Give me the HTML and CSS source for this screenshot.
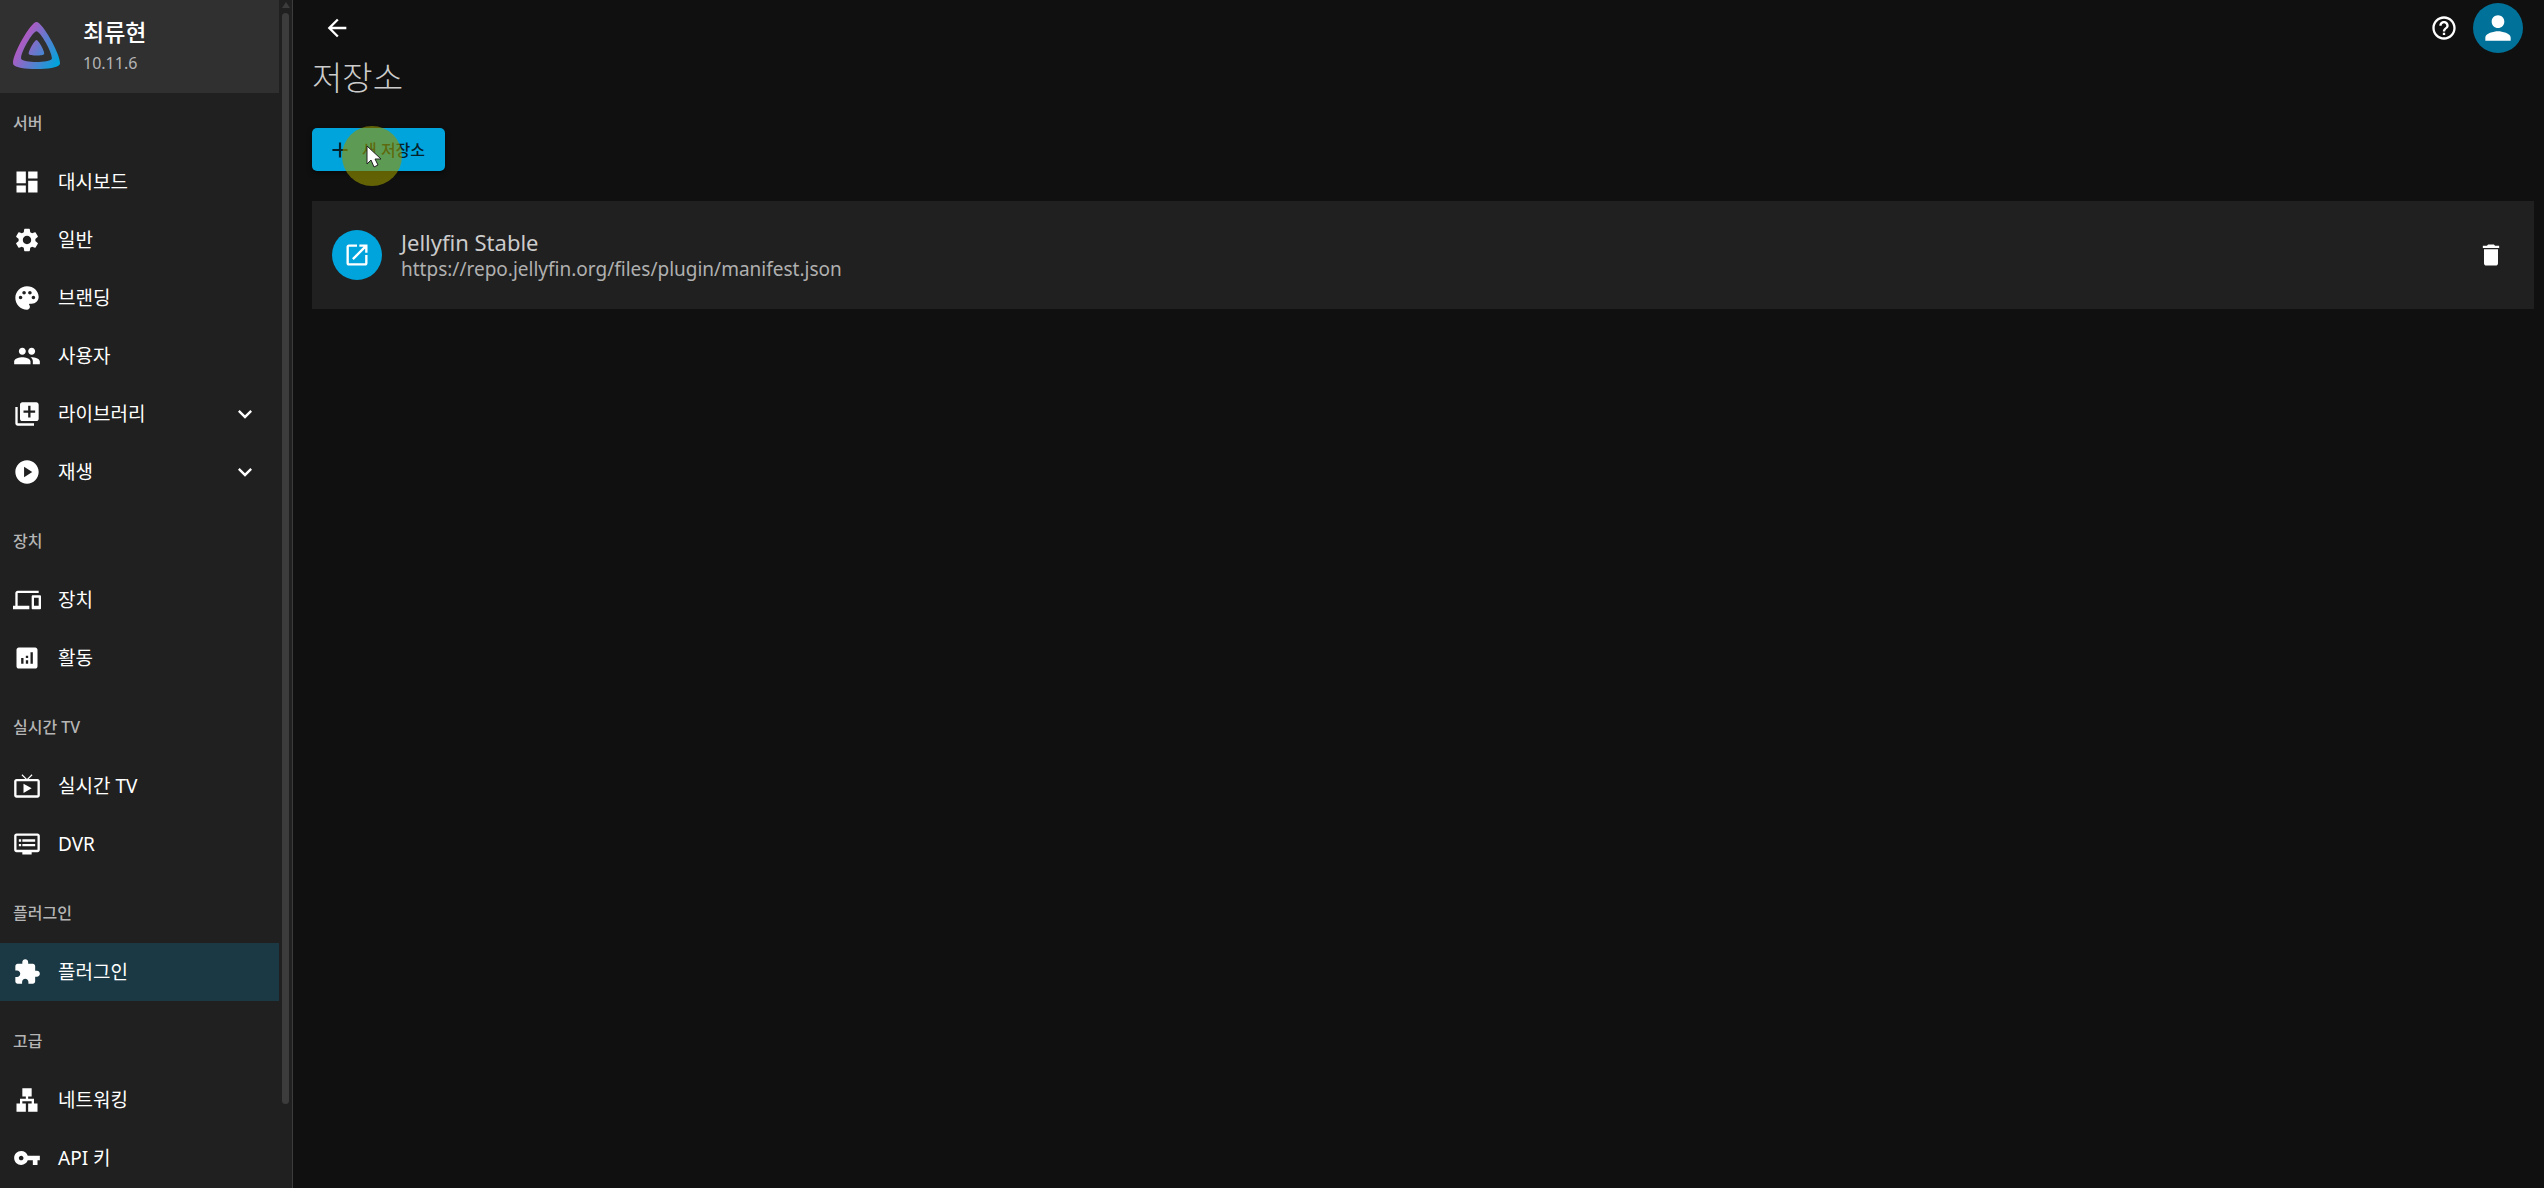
FILE: index.html
```html
<!DOCTYPE html>
<html lang="ko">
<head>
  <meta charset="UTF-8" />
  <meta name="viewport" content="width=device-width, initial-scale=1" />
  <title>저장소</title>
  <link rel="stylesheet" href="styles.css">
</head>
<body>
  <aside class="sidebar">
    <nav class="drawer">
      <a class="brand" href="#">
        <svg class="brand-logo" viewBox="0 0 512 512">
          <defs>
            <linearGradient id="logo-gradient" gradientUnits="userSpaceOnUse" x1="110" y1="213" x2="496" y2="436">
              <stop offset="0" stop-color="#aa5cc3" />
              <stop offset="1" stop-color="#00a4dc" />
            </linearGradient>
          </defs>
          <path fill="url(#logo-gradient)" d="M256 196.2c-22.4 0-94.8 131.3-83.8 153.4s156.8 21.9 167.7 0-61.3-153.4-83.9-153.4z" />
          <path fill="url(#logo-gradient)" fill-rule="evenodd" d="M256 0C188.3 0-29.8 395.4 3.4 462.2s472.3 66 505.2 0S323.8 0 256 0zm165.6 404.3c-21.6 43.2-309.3 43.8-331.1 0S211.7 101.4 256 101.4 443.2 361 421.6 404.3z" />
        </svg>
        <span class="brand-text">
          <span class="brand-name">최류현</span>
          <span class="brand-version">10.11.6</span>
        </span>
      </a>

      <section class="nav-group">
        <h2>서버</h2>
        <a class="nav-item" href="#"><svg class="icon" viewBox="0 0 24 24"><path d="M3 13h8V3H3v10zm0 8h8v-6H3v6zm10 0h8V11h-8v10zm0-18v6h8V3h-8z" /></svg><span>대시보드</span></a>
        <a class="nav-item" href="#"><svg class="icon" viewBox="0 0 24 24"><path d="M19.14 12.94c.04-.3.06-.61.06-.94 0-.32-.02-.64-.07-.94l2.03-1.58c.18-.14.23-.41.12-.61l-1.92-3.32c-.12-.22-.37-.29-.59-.22l-2.39.96c-.5-.38-1.03-.7-1.62-.94l-.36-2.54c-.04-.24-.24-.41-.48-.41h-3.84c-.24 0-.43.17-.47.41l-.36 2.54c-.59.24-1.13.57-1.62.94l-2.39-.96c-.22-.08-.47 0-.59.22L2.74 8.87c-.12.21-.08.47.12.61l2.03 1.58c-.05.3-.09.63-.09.94s.02.64.07.94l-2.03 1.58c-.18.14-.23.41-.12.61l1.92 3.32c.12.22.37.29.59.22l2.39-.96c.5.38 1.03.7 1.62.94l.36 2.54c.05.24.24.41.48.41h3.84c.24 0 .44-.17.47-.41l.36-2.54c.59-.24 1.13-.56 1.62-.94l2.39.96c.22.08.47 0 .59-.22l1.92-3.32c.12-.22.07-.47-.12-.61l-2.01-1.58zM12 15.6c-1.98 0-3.6-1.62-3.6-3.6s1.62-3.6 3.6-3.6 3.6 1.62 3.6 3.6-1.62 3.6-3.6 3.6z" /></svg><span>일반</span></a>
        <a class="nav-item" href="#"><svg class="icon" viewBox="0 0 24 24"><path d="M12 2C6.49 2 2 6.49 2 12s4.49 10 10 10c1.38 0 2.5-1.12 2.5-2.5 0-.61-.23-1.2-.64-1.67-.08-.1-.13-.21-.13-.33 0-.28.22-.5.5-.5H16c3.31 0 6-2.69 6-6 0-4.96-4.49-9-10-9zm-5.5 11c-.83 0-1.5-.67-1.5-1.5S5.67 10 6.5 10s1.5.67 1.5 1.5S7.33 13 6.5 13zm3-4C8.67 9 8 8.33 8 7.5S8.67 6 9.5 6s1.5.67 1.5 1.5S10.33 9 9.5 9zm5 0c-.83 0-1.5-.67-1.5-1.5S13.67 6 14.5 6s1.5.67 1.5 1.5S15.33 9 14.5 9zm3 4c-.83 0-1.5-.67-1.5-1.5s.67-1.5 1.5-1.5 1.5.67 1.5 1.5-.67 1.5-1.5 1.5z" /></svg><span>브랜딩</span></a>
        <a class="nav-item" href="#"><svg class="icon" viewBox="0 0 24 24"><path d="M16 11c1.66 0 2.99-1.34 2.99-3S17.66 5 16 5s-3 1.34-3 3 1.34 3 3 3zm-8 0c1.66 0 2.99-1.34 2.99-3S9.66 5 8 5 5 6.34 5 8s1.34 3 3 3zm0 2c-2.33 0-7 1.17-7 3.5V19h14v-2.5c0-2.33-4.67-3.5-7-3.5zm8 0c-.29 0-.62.02-.97.05 1.16.84 1.97 1.97 1.97 3.45V19h6v-2.5c0-2.33-4.67-3.5-7-3.5z" /></svg><span>사용자</span></a>
        <a class="nav-item" href="#"><svg class="icon" viewBox="0 0 24 24"><path d="M4 6H2v14c0 1.1.9 2 2 2h14v-2H4V6zm16-4H8c-1.1 0-2 .9-2 2v12c0 1.1.9 2 2 2h12c1.1 0 2-.9 2-2V4c0-1.1-.9-2-2-2zm-1 9h-4v4h-2v-4H9V9h4V5h2v4h4v2z" /></svg><span>라이브러리</span><svg class="icon chevron" viewBox="0 0 24 24"><path d="M16.59 8.59 12 13.17 7.41 8.59 6 10l6 6 6-6z" /></svg></a>
        <a class="nav-item" href="#"><svg class="icon" viewBox="0 0 24 24"><path d="M12 2C6.48 2 2 6.48 2 12s4.48 10 10 10 10-4.48 10-10S17.52 2 12 2zm-2.5 14.500v-9l7 4.5-7 4.5z" /></svg><span>재생</span><svg class="icon chevron" viewBox="0 0 24 24"><path d="M16.59 8.59 12 13.17 7.41 8.59 6 10l6 6 6-6z" /></svg></a>
      </section>

      <section class="nav-group">
        <h2>장치</h2>
        <a class="nav-item" href="#"><svg class="icon" viewBox="0 0 24 24"><path d="M4 6h18V4H4c-1.1 0-2 .9-2 2v11H0v3h14v-3H4V6zm19 2h-6c-.55 0-1 .45-1 1v10c0 .55.45 1 1 1h6c.55 0 1-.45 1-1V9c0-.55-.45-1-1-1zm-1 9h-4v-7h4v7z" /></svg><span>장치</span></a>
        <a class="nav-item" href="#"><svg class="icon" viewBox="0 0 24 24"><path d="M19 3H5c-1.1 0-2 .9-2 2v14c0 1.1.9 2 2 2h14c1.1 0 2-.9 2-2V5c0-1.1-.9-2-2-2zM9 17H7v-5h2v5zm4 0h-2v-3h2v3zm0-5h-2v-2h2v2zm4 5h-2V7h2v10z" /></svg><span>활동</span></a>
      </section>

      <section class="nav-group">
        <h2>실시간 TV</h2>
        <a class="nav-item" href="#"><svg class="icon" viewBox="0 0 24 24"><path d="M21 6h-7.59l3.29-3.29L16 2l-4 4-4-4-.7.71L10.59 6H3c-1.1 0-2 .89-2 2v12c0 1.1.9 2 2 2h18c1.1 0 2-.9 2-2V8c0-1.11-.9-2-2-2zm0 14H3V8h18v12zM9 10v8l7-4z" /></svg><span>실시간 TV</span></a>
        <a class="nav-item" href="#"><svg class="icon" viewBox="0 0 24 24"><path d="M21 3H3c-1.1 0-2 .9-2 2v12c0 1.1.9 2 2 2h5v2h8v-2h5c1.1 0 1.99-.9 1.99-2L23 5c0-1.1-.9-2-2-2zm0 14H3V5h18v12zm-2-9H8v2h11V8zm0 4H8v2h11v-2zM7 8H5v2h2V8zm0 4H5v2h2v-2z" /></svg><span>DVR</span></a>
      </section>

      <section class="nav-group">
        <h2>플러그인</h2>
        <a class="nav-item selected" href="#" aria-current="page"><svg class="icon" viewBox="0 0 24 24"><path d="M20.5 11H19V7c0-1.1-.9-2-2-2h-4V3.500C13 2.12 11.88 1 10.5 1S8 2.12 8 3.500V5H4c-1.1 0-1.99.9-1.99 2v3.800H3.500c1.49 0 2.7 1.21 2.7 2.7s-1.21 2.7-2.7 2.700H2V20c0 1.1.9 2 2 2h3.800v-1.500c0-1.49 1.21-2.7 2.7-2.7s2.7 1.21 2.7 2.700V22H17c1.1 0 2-.9 2-2v-4h1.500c1.38 0 2.5-1.12 2.5-2.500S21.88 11 20.5 11z" /></svg><span>플러그인</span></a>
      </section>

      <section class="nav-group">
        <h2>고급</h2>
        <a class="nav-item" href="#"><svg class="icon" viewBox="0 0 24 24"><path d="M13 22h8v-7h-3v-4h-5V9h3V2H8v7h3v2H6v4H3v7h8v-7H8v-2h8v2h-3z" /></svg><span>네트워킹</span></a>
        <a class="nav-item" href="#"><svg class="icon" viewBox="0 0 24 24"><path d="M12.65 10C11.83 7.67 9.61 6 7 6c-3.31 0-6 2.69-6 6s2.69 6 6 6c2.61 0 4.83-1.67 5.65-4H17v4h4v-4h2v-4H12.65zM7 14c-1.1 0-2-.9-2-2s.9-2 2-2 2 .9 2 2-.9 2-2 2z" /></svg><span>API 키</span></a>
      </section>
    </nav>
    <div class="scrollbar">
      <span class="scroll-arrow"></span>
      <span class="scroll-thumb"></span>
    </div>
  </aside>

  <main class="page">
    <header class="toolbar">
      <button class="icon-button" type="button" aria-label="뒤로"><svg class="icon" viewBox="0 0 24 24"><path d="M20 11H7.83l5.59-5.59L12 4l-8 8 8 8 1.41-1.41L7.83 13H20v-2z" /></svg></button>
      <div class="toolbar-actions">
        <a class="icon-button" href="#" aria-label="도움말"><svg class="icon" viewBox="0 0 24 24"><path d="M11 18h2v-2h-2v2zm1-16C6.48 2 2 6.48 2 12s4.48 10 10 10 10-4.48 10-10S17.52 2 12 2zm0 18c-4.41 0-8-3.59-8-8s3.59-8 8-8 8 3.59 8 8-3.59 8-8 8zm0-14c-2.21 0-4 1.79-4 4h2c0-1.1.9-2 2-2s2 .9 2 2c0 2-3 1.75-3 5h2c0-2.25 3-2.5 3-5 0-2.21-1.79-4-4-4z" /></svg></a>
        <button class="avatar" type="button" aria-label="사용자 메뉴"><svg viewBox="0 0 24 24"><path d="M12 12c2.21 0 4-1.79 4-4s-1.79-4-4-4-4 1.79-4 4 1.79 4 4 4zm0 2c-2.67 0-8 1.34-8 4v2h16v-2c0-2.66-5.33-4-8-4z" /></svg></button>
      </div>
    </header>

    <div class="content">
      <h1>저장소</h1>

      <button class="new-button" type="button">
        <svg viewBox="0 0 24 24"><path d="M19 13h-6v6h-2v-6H5v-2h6V5h2v6h6v2z" /></svg>
        <span>새 저장소</span>
        <span class="pointer">
          <svg viewBox="0 0 16 24"><path d="M1 1v18l4-4 3 7 4-2-3-6h6z" /></svg>
        </span>
      </button>

      <ul class="repositories">
        <li class="repository">
          <a class="repository-link" href="#">
            <span class="repository-icon"><svg class="icon" viewBox="0 0 24 24"><path d="M19 19H5V5h7V3H5c-1.11 0-2 .9-2 2v14c0 1.1.89 2 2 2h14c1.1 0 2-.9 2-2v-7h-2v7zM14 3v2h3.59l-9.83 9.83 1.41 1.41L19 6.410V10h2V3h-7z" /></svg></span>
            <span class="repository-text">
              <span class="repository-name">Jellyfin Stable</span>
              <span class="repository-url">https://repo.jellyfin.org/files/plugin/manifest.json</span>
            </span>
          </a>
          <button class="icon-button" type="button" aria-label="삭제"><svg class="icon" viewBox="0 0 24 24"><path d="M6 19c0 1.1.9 2 2 2h8c1.1 0 2-.9 2-2V7H6v12zM19 4h-3.500l-1-1h-5l-1 1H5v2h14V4z" /></svg></button>
        </li>
      </ul>
    </div>
  </main>
</body>
</html>
```
FILE: styles.css
```css
* {
  box-sizing: border-box;
}
body {
  margin: 0;
  height: 100vh;
  display: flex;
  overflow: hidden;
  background: #101010;
  color: #fff;
  font-family: "Noto Sans", "Noto Sans CJK KR", sans-serif;
  font-size: 19px;
}
a {
  color: inherit;
  text-decoration: none;
}
button {
  padding: 0;
  border: none;
  background: none;
  color: inherit;
  font: inherit;
  cursor: pointer;
}
svg {
  display: block;
  flex-shrink: 0;
  fill: currentColor;
}
.icon {
  width: 28px;
  height: 28px;
}

/* sidebar */
.sidebar {
  display: flex;
  flex-shrink: 0;
  width: 293px;
  background: #202020;
  border-right: 1px solid #3c3c3c;
}
.drawer {
  flex: 1;
  overflow: hidden;
}
.brand {
  display: flex;
  align-items: center;
  gap: 23px;
  height: 93px;
  padding: 0 13px 2px;
  background: #303030;
}
.brand-logo {
  width: 47px;
  height: 47px;
}
.brand-text {
  display: flex;
  flex-direction: column;
}
.brand-name {
  font-size: 23px;
  font-weight: 500;
  line-height: 34px;
}
.brand-version {
  color: #b5b5b5;
  font-size: 16px;
  line-height: 28px;
}
.nav-group {
  padding-bottom: 10px;
}
.nav-group h2 {
  margin: 0;
  padding: 0 13px;
  color: #b5b5b5;
  font-size: 16px;
  font-weight: 500;
  line-height: 60px;
}
.nav-item {
  display: flex;
  align-items: center;
  gap: 17px;
  height: 58px;
  padding: 0 20px 0 13px;
  line-height: 26px;
}
.nav-item.selected {
  background: #1a3944;
}
.chevron {
  margin-left: auto;
}
.scrollbar {
  display: flex;
  flex-direction: column;
  align-items: center;
  gap: 5px;
  width: 13px;
  padding-top: 2px;
}
.scroll-arrow {
  border: 4px solid transparent;
  border-top: none;
  border-bottom: 6px solid #3c3c3c;
}
.scroll-thumb {
  width: 7px;
  height: 92%;
  border-radius: 4px;
  background: #3c3c3c;
}

/* page */
.page {
  flex: 1;
  min-width: 0;
}
.toolbar {
  display: flex;
  align-items: center;
  justify-content: space-between;
  height: 56px;
  padding: 0 21px;
}
.toolbar-actions {
  display: flex;
  align-items: center;
  gap: 6px;
}
.icon-button {
  display: flex;
  align-items: center;
  justify-content: center;
  width: 46px;
  height: 46px;
  border-radius: 50%;
}
.avatar {
  display: flex;
  align-items: center;
  justify-content: center;
  width: 50px;
  height: 50px;
  border-radius: 50%;
  background: #00729a;
}
.avatar svg {
  width: 38px;
  height: 38px;
}
.content {
  padding: 0 10px 0 19px;
}
h1 {
  margin: 0;
  color: #ccc;
  font-size: 33px;
  font-weight: 300;
  line-height: 44px;
}
.new-button {
  position: relative;
  display: flex;
  align-items: center;
  gap: 9px;
  height: 43px;
  margin-top: 28px;
  padding: 0 20px 0 15px;
  border-radius: 5px;
  background: #00a4dc;
  box-shadow: 0 2px 5px rgba(0, 0, 0, 0.5);
  color: #04222c;
  font-size: 16px;
  font-weight: 500;
  line-height: 24px;
}
.new-button > svg {
  width: 26px;
  height: 26px;
}
.pointer {
  position: absolute;
  top: -2px;
  left: 30px;
  width: 60px;
  height: 60px;
  border-radius: 50%;
  background: rgba(150, 150, 0, 0.62);
}
.pointer svg {
  width: 16px;
  height: 24px;
  margin: 19px 24px;
  fill: #fff;
  stroke: #222;
}
.repositories {
  margin: 30px 0 0;
  padding: 0;
  list-style: none;
}
.repository {
  display: flex;
  align-items: center;
  height: 108px;
  padding: 0 20px;
  background: #202020;
}
.repository-link {
  display: flex;
  flex: 1;
  align-items: center;
  gap: 19px;
}
.repository-icon {
  display: flex;
  align-items: center;
  justify-content: center;
  width: 50px;
  height: 50px;
  border-radius: 50%;
  background: #00a4dc;
}
.repository-text {
  display: flex;
  flex-direction: column;
}
.repository-name {
  color: #ccc;
  font-size: 22px;
  line-height: 28px;
}
.repository-url {
  color: #b0b0b0;
  font-size: 19px;
  line-height: 26px;
}
```
